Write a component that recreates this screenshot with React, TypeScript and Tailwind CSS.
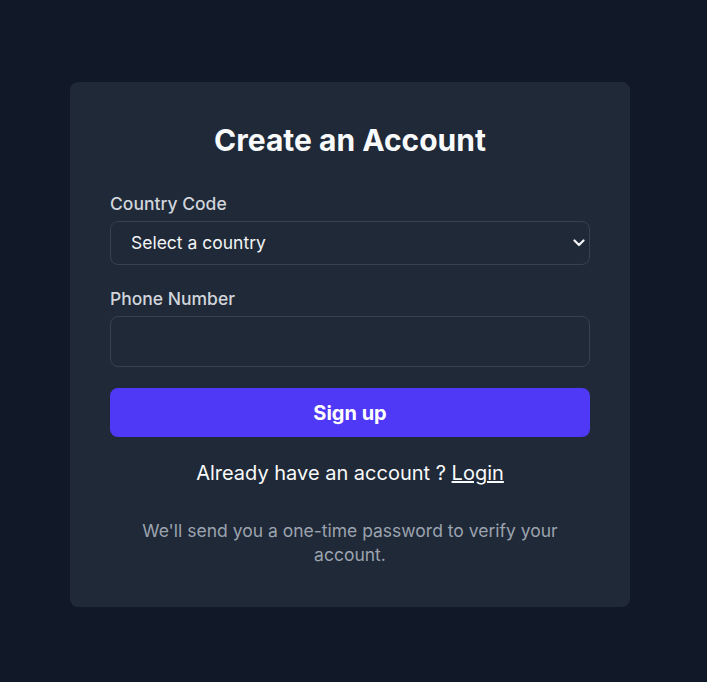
import { useState } from 'react';

export default function App() {
  const [country, setCountry] = useState('');
  const [phone, setPhone] = useState('');

  return (
    <div
      className="min-h-screen bg-[#111827] flex pl-[70px] pt-[82px] pb-[75px]"
      style={{ fontFamily: 'Inter, "Noto Sans", sans-serif' }}
    >
      <div className="w-[560px] bg-[#1f2937] rounded-lg p-10 h-fit">
        <h1 className="text-[30px] leading-9 font-bold text-[#f9fafb] text-center mb-8">
          Create an Account
        </h1>

        {/* Country */}
        <label className="block text-[17.5px] leading-7 font-medium text-[#d1d5db] mb-[3px]">
          Country Code
        </label>
        <div className="relative mb-5">
          <select
            value={country}
            onChange={(e) => setCountry(e.target.value)}
            className="appearance-none w-full h-[44px] bg-[#1f2937] border border-[#374151] rounded-lg pl-5 pr-8 text-[17.5px] text-[#f3f4f6] outline-none"
          >
            <option value="">Select a country</option>
            <option value="+1">United States (+1)</option>
            <option value="+44">United Kingdom (+44)</option>
            <option value="+91">India (+91)</option>
          </select>
          <svg
            className="absolute right-[5px] top-1/2 -translate-y-1/2 pointer-events-none"
            width="12"
            height="8"
            viewBox="0 0 12 8"
            fill="none"
          >
            <polyline
              points="1.5,1.5 6,6 10.5,1.5"
              stroke="#f3f4f6"
              strokeWidth="2.2"
              strokeLinecap="round"
              strokeLinejoin="round"
            />
          </svg>
        </div>

        {/* Phone */}
        <label className="block text-[17.5px] leading-7 font-medium text-[#d1d5db] mb-[3px]">
          Phone Number
        </label>
        <input
          type="tel"
          value={phone}
          onChange={(e) => setPhone(e.target.value)}
          className="block w-full h-[51px] bg-[#1f2937] border border-[#374151] rounded-lg px-4 text-[17.5px] text-[#f3f4f6] outline-none"
        />

        <button className="w-full h-[49px] mt-[21px] bg-[#4f39f6] hover:bg-[#432dd7] text-white text-xl font-bold rounded-lg">
          Sign up
        </button>

        <p className="mt-[22px] text-xl leading-7 text-[#f9fafb] text-center">
          Already have an account ?{' '}
          <a href="#" className="underline">
            Login
          </a>
        </p>

        <p className="mt-8 text-[17.5px] leading-6 text-[#9ca3af] text-center">
          We'll send you a one-time password to verify your account.
        </p>
      </div>
    </div>
  );
}
